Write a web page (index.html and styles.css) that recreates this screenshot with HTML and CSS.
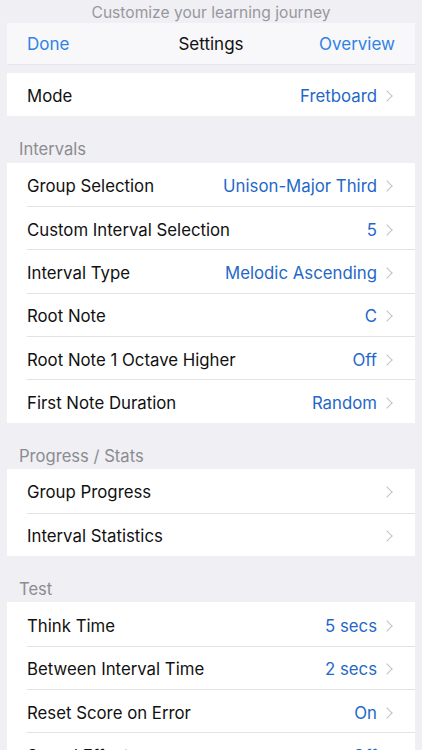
FILE: index.html
```html
<!DOCTYPE html>
<html lang="en">
<head>
  <meta charset="UTF-8" />
  <meta name="viewport" content="width=device-width, initial-scale=1.0">
  <title>Settings</title>
  <link rel="stylesheet" href="styles.css">
</head>
<body>
  <div class="screen">
    <p class="tagline">Customize your learning journey</p>

    <div class="navbar">
      <span class="nav-btn">Done</span>
      <span class="nav-title">Settings</span>
      <span class="nav-btn right">Overview</span>
    </div>

    <ul class="group first">
      <li class="row"><span class="label">Mode</span><span class="value">Fretboard</span><span class="chev"></span></li>
    </ul>

    <h2 class="section">Intervals</h2>
    <ul class="group">
      <li class="row"><span class="label">Group Selection</span><span class="value">Unison-Major Third</span><span class="chev"></span></li>
      <li class="row"><span class="label">Custom Interval Selection</span><span class="value">5</span><span class="chev"></span></li>
      <li class="row"><span class="label">Interval Type</span><span class="value">Melodic Ascending</span><span class="chev"></span></li>
      <li class="row"><span class="label">Root Note</span><span class="value">C</span><span class="chev"></span></li>
      <li class="row"><span class="label">Root Note 1 Octave Higher</span><span class="value">Off</span><span class="chev"></span></li>
      <li class="row"><span class="label">First Note Duration</span><span class="value">Random</span><span class="chev"></span></li>
    </ul>

    <h2 class="section">Progress / Stats</h2>
    <ul class="group">
      <li class="row"><span class="label">Group Progress</span><span class="chev"></span></li>
      <li class="row"><span class="label">Interval Statistics</span><span class="chev"></span></li>
    </ul>

    <h2 class="section">Test</h2>
    <ul class="group">
      <li class="row"><span class="label">Think Time</span><span class="value">5 secs</span><span class="chev"></span></li>
      <li class="row"><span class="label">Between Interval Time</span><span class="value">2 secs</span><span class="chev"></span></li>
      <li class="row"><span class="label">Reset Score on Error</span><span class="value">On</span><span class="chev"></span></li>
      <li class="row"><span class="label">Sound Effects</span><span class="value">Off</span><span class="chev"></span></li>
    </ul>
  </div>
</body>
</html>
```

FILE: styles.css
```css
* {
  box-sizing: border-box;
}
body {
  margin: 0;
  background: #efeff4;
  font-family: 'Inter', 'Roboto', sans-serif;
  color: #111;
  overflow: hidden;
}
.screen {
  padding: 0 7px;
}
.tagline {
  margin: 0;
  height: 23px;
  line-height: 25px;
  text-align: center;
  font-size: 15.6px;
  color: #98989c;
}
.navbar {
  height: 42px;
  background: #f8f8fa;
  display: grid;
  grid-template-columns: 1fr auto 1fr;
  align-items: center;
  padding: 0 20px;
  font-size: 17px;
  border-bottom: 1px solid #e6e6ea;
}
.nav-btn {
  color: #2f83e2;
}
.nav-btn.right {
  text-align: right;
}
.nav-title {
  color: #111;
}
.group {
  list-style: none;
  margin: 0;
  padding: 0;
  background: #fff;
}
.group.first {
  margin-top: 8px;
}
.section {
  margin: 0;
  height: 46.5px;
  padding: 23px 0 0 12px;
  font-size: 16.6px;
  font-weight: normal;
  color: #8c8c90;
}
.row {
  height: 43.33px;
  display: flex;
  align-items: center;
  margin-left: 20px;
  padding: 3px 24px 0 0;
  font-size: 16.8px;
  border-top: 1px solid #e3e3e7;
}
.row:first-child {
  border-top: none;
}
.label {
  flex: 1;
}
.value {
  color: #1f68c9;
}
.chev {
  width: 8px;
  height: 8px;
  margin-left: 6px;
  border-top: 1.6px solid #c2c2c6;
  border-right: 1.6px solid #c2c2c6;
  transform: rotate(45deg);
}
```
